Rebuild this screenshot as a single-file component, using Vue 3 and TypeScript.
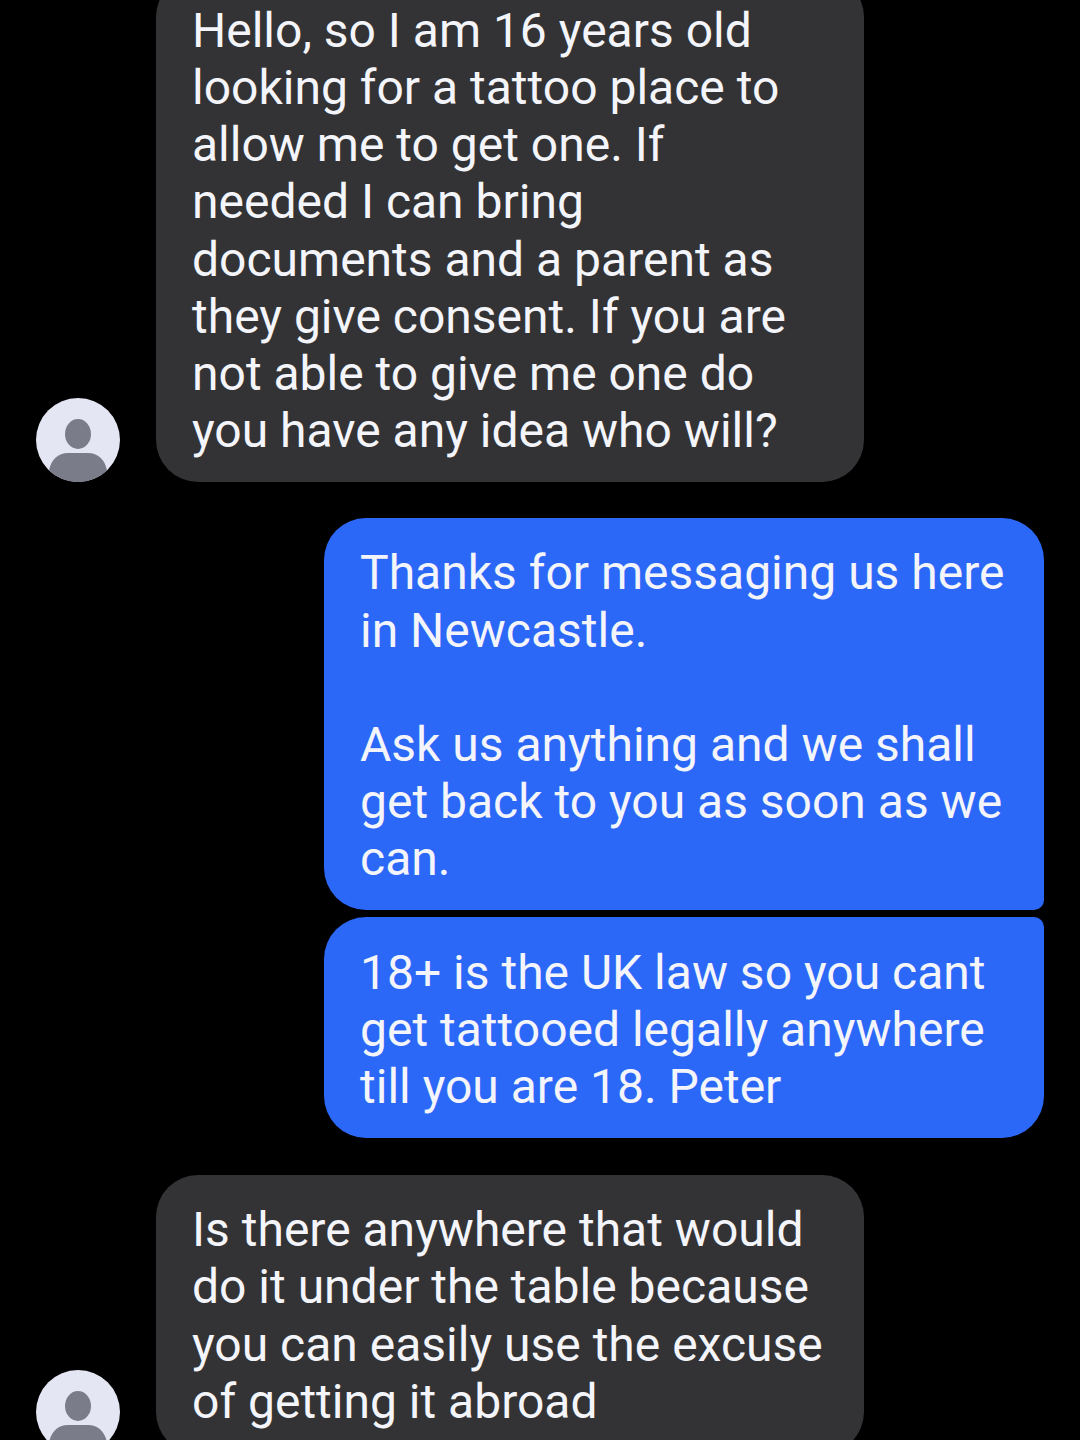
<script setup lang="ts">
interface Row {
  id: number
  lines: string[]
}
const first: string[] = [
  'Hello, so I am 16 years old',
  'looking for a tattoo place to',
  'allow me to get one. If',
  'needed I can bring',
  'documents and a parent as',
  'they give consent. If you are',
  'not able to give me one do',
  'you have any idea who will?',
]
const second: string[] = [
  'Is there anywhere that would',
  'do it under the table because',
  'you can easily use the excuse',
  'of getting it abroad',
]
const incoming: Row[] = [
  { id: 1, lines: first },
  { id: 2, lines: second },
]
</script>

<template>
  <main class="thread">
    <div class="row in">
      <svg class="avatar" viewBox="0 0 84 84" aria-hidden="true">
        <circle cx="42" cy="42" r="42" fill="#e5e6f3" />
        <ellipse cx="42" cy="36" rx="13" ry="15" fill="#7a7c89" />
        <path d="M13 72.4 C15 62 22 55 32 55 H52 C62 55 69 62 71 72.4 A42 42 0 0 1 13 72.4 Z" fill="#7a7c89" />
      </svg>
      <div class="bubble grey">
        <div v-for="l in incoming[0].lines" :key="l" class="line">{{ l }}</div>
      </div>
    </div>

    <div class="group">
      <div class="bubble blue top">
        <div class="line">Thanks for messaging us here</div>
        <div class="line">in Newcastle.</div>
        <div class="line blank">&nbsp;</div>
        <div class="line">Ask us anything and we shall</div>
        <div class="line">get back to you as soon as we</div>
        <div class="line">can.</div>
      </div>
      <div class="bubble blue bottom">
        <div class="line">18+ is the UK law so you cant</div>
        <div class="line">get tattooed legally anywhere</div>
        <div class="line">till you are 18. Peter</div>
      </div>
    </div>

    <div class="row in last">
      <svg class="avatar" viewBox="0 0 84 84" aria-hidden="true">
        <circle cx="42" cy="42" r="42" fill="#e5e6f3" />
        <ellipse cx="42" cy="36" rx="13" ry="15" fill="#7a7c89" />
        <path d="M13 72.4 C15 62 22 55 32 55 H52 C62 55 69 62 71 72.4 A42 42 0 0 1 13 72.4 Z" fill="#7a7c89" />
      </svg>
      <div class="bubble grey">
        <div v-for="l in incoming[1].lines" :key="l" class="line">{{ l }}</div>
      </div>
    </div>
  </main>
</template>

<style scoped>
.thread {
  width: 1080px;
  height: 1440px;
  overflow: hidden;
  background: #000;
  display: flex;
  flex-direction: column;
  gap: 36px;
  font-family: Roboto, "Liberation Sans", sans-serif;
  font-size: 48px;
  color: #f4f5fa;
}
.thread > :first-child {
  margin-top: -24.6px;
}
.row {
  display: flex;
  align-items: flex-end;
  gap: 36px;
  padding-left: 36px;
  flex: none;
}
.avatar {
  width: 84px;
  height: 84px;
  flex: none;
  display: block;
}
.bubble {
  padding: 26.4px 36px 22.6px;
  box-sizing: border-box;
}
.last .bubble {
  padding-bottom: 24px;
}
.line {
  line-height: 57.2px;
  white-space: nowrap;
}
.grey {
  width: 708px;
  background: #333335;
  border-radius: 42px;
}
.group {
  display: flex;
  flex-direction: column;
  gap: 7px;
  align-items: flex-end;
  padding-right: 36px;
  margin-bottom: 1px;
  flex: none;
}
.blue {
  width: 720px;
  background: #2c68f7;
}
.top {
  border-radius: 42px 42px 10px 42px;
}
.bottom {
  border-radius: 42px 10px 42px 42px;
}
</style>
